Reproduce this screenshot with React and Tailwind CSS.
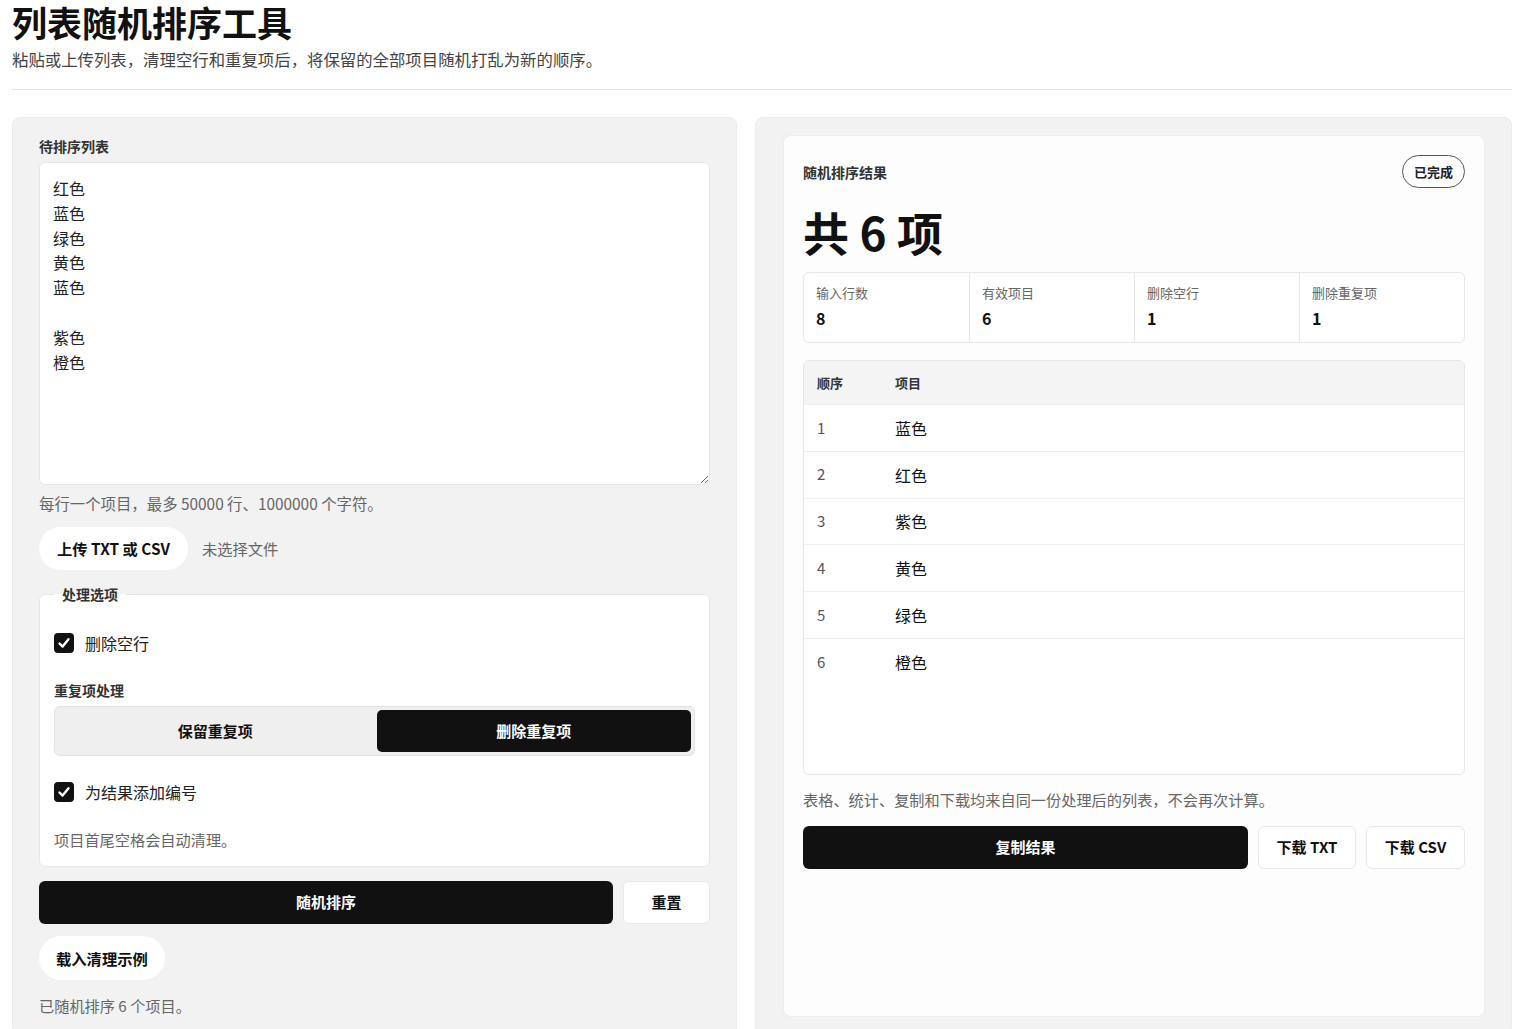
import React, { useState } from "react";

const FONT = { fontFamily: '"Noto Sans CJK SC", "Noto Sans", sans-serif' };

function Check({ checked, onChange, label }) {
  return (
    <label className="flex items-center h-6 cursor-pointer select-none" onClick={onChange}>
      <span className={`w-5 h-5 rounded-[4px] flex items-center justify-center ${checked ? "bg-[#111]" : "bg-white border border-[#888]"}`}>
        {checked && (
          <svg width="14" height="14" viewBox="0 0 14 14" fill="none">
            <path d="M2.5 7.5 L5.6 10.6 L11.5 3.2" stroke="white" strokeWidth="2.4" strokeLinecap="round" strokeLinejoin="round" />
          </svg>
        )}
      </span>
      <span className="ml-[11px] text-[16px] text-[#222]">{label}</span>
    </label>
  );
}

export default function App() {
  const [text, setText] = useState("红色\n蓝色\n绿色\n黄色\n蓝色\n\n紫色\n橙色");
  const [removeEmpty, setRemoveEmpty] = useState(true);
  const [addNum, setAddNum] = useState(true);
  const [dedupe, setDedupe] = useState(true);

  const rows = ["蓝色", "红色", "紫色", "黄色", "绿色", "橙色"];
  const stats = [
    ["输入行数", "8"],
    ["有效项目", "6"],
    ["删除空行", "1"],
    ["删除重复项", "1"],
  ];

  return (
    <div style={FONT} className="bg-white min-h-screen text-[#111]">
      <div className="ml-3 w-[1500px]">
        <h1 className="pt-px text-[35px] leading-[42px] font-bold text-[#111]">列表随机排序工具</h1>
        <p className="mt-[4px] text-[16.4px] leading-6 text-[#444]">
          粘贴或上传列表，清理空行和重复项后，将保留的全部项目随机打乱为新的顺序。
        </p>
        <div className="mt-[18px] border-t border-[#e3e3e3]" />

        <div className="mt-[27px] grid grid-cols-[725px_757px] gap-[18px]">
          {/* Left panel */}
          <section className="bg-[#f2f2f2] border border-[#ececec] rounded-lg pt-[18px] pb-[18px] px-[26px] flex flex-col">
            <label className="text-[14px] leading-5 font-bold text-[#333]">待排序列表</label>
            <textarea
              value={text}
              onChange={(e) => setText(e.target.value)}
              spellCheck={false}
              className="mt-[6px] h-[323px] w-full resize-y bg-white border border-[#e6e6e6] rounded-md px-[13px] pt-[13px] text-[16px] leading-[24.8px] text-[#222] outline-none"
              style={FONT}
            />
            <p className="mt-[8px] text-[15.4px] leading-[21px] text-[#666]">每行一个项目，最多 50000 行、1000000 个字符。</p>
            <div className="mt-[13px] flex items-center">
              <button className="h-[43px] px-[18px] rounded-full bg-white text-[15.3px] font-bold text-[#111]">上传 TXT 或 CSV</button>
              <span className="ml-[14px] text-[15.3px] text-[#666]">未选择文件</span>
            </div>

            <fieldset className="mt-[14px] bg-white border border-[#e6e6e6] rounded-md px-[14px] pt-[27px] pb-[16px]">
              <legend className="px-2 text-[14px] leading-5 font-bold text-[#333]">处理选项</legend>
              <Check checked={removeEmpty} onChange={() => setRemoveEmpty(!removeEmpty)} label="删除空行" />
              <div className="mt-[25px] text-[14px] leading-5 font-bold text-[#333]">重复项处理</div>
              <div className="mt-[6px] h-[50px] bg-[#efefef] border border-[#e2e2e2] rounded-md p-[3px] grid grid-cols-2 gap-1">
                <button
                  onClick={() => setDedupe(false)}
                  className={`rounded-[5px] text-[15px] font-bold ${!dedupe ? "bg-[#111] text-white" : "text-[#111]"}`}
                >
                  保留重复项
                </button>
                <button
                  onClick={() => setDedupe(true)}
                  className={`rounded-[5px] text-[15px] font-bold ${dedupe ? "bg-[#111] text-white" : "text-[#111]"}`}
                >
                  删除重复项
                </button>
              </div>
              <div className="mt-6">
                <Check checked={addNum} onChange={() => setAddNum(!addNum)} label="为结果添加编号" />
              </div>
              <p className="mt-[25px] text-[15.2px] leading-[21px] text-[#666]">项目首尾空格会自动清理。</p>
            </fieldset>

            <div className="mt-[14px] flex gap-[10px]">
              <button className="flex-1 h-[43px] rounded-md bg-[#111] text-white text-[15px] font-bold">随机排序</button>
              <button className="w-[87px] h-[43px] rounded-md bg-white border border-[#e8e8e8] text-[15px] font-bold text-[#111]">重置</button>
            </div>
            <div className="mt-[12px]">
              <button className="h-[44px] px-[17px] rounded-full bg-white text-[15.3px] font-bold text-[#111]">载入清理示例</button>
            </div>
            <p className="mt-[15px] text-[15.2px] leading-[21px] text-[#666]">已随机排序 6 个项目。</p>
          </section>

          {/* Right panel */}
          <section className="bg-[#f2f2f2] border border-[#ececec] rounded-lg pt-[17px] pb-[17px] pl-[27px] pr-[26px] flex flex-col">
            <div className="flex-1 bg-[#fdfdfd] border border-[#ececec] rounded-lg pt-[19px] px-[19px] pb-5">
              <div className="flex items-center justify-between">
                <h2 className="text-[14px] leading-5 font-bold text-[#333]">随机排序结果</h2>
                <span className="h-[33px] px-[11px] flex items-center rounded-full border border-[#555] text-[13px] font-bold text-[#222]">已完成</span>
              </div>
              <div className="mt-[19px] text-[46px] leading-[48px] font-bold text-[#111]">共 6 项</div>

              <div className="mt-[17px] grid grid-cols-4 border border-[#e6e6e6] rounded-md bg-white">
                {stats.map(([k, v], i) => (
                  <div key={k} className={`h-[69px] px-3 pt-[10px] ${i > 0 ? "border-l border-[#e6e6e6]" : ""}`}>
                    <div className="text-[13px] leading-[20px] text-[#666]">{k}</div>
                    <div className="mt-[5px] text-[16px] leading-[20px] font-bold text-[#111]">{v}</div>
                  </div>
                ))}
              </div>

              <div className="mt-[17px] h-[415px] border border-[#e6e6e6] rounded-md bg-white overflow-hidden">
                <div className="h-[43px] bg-[#f4f4f4] flex items-center px-[13px] text-[13px] font-bold text-[#333]">
                  <div className="w-[78px]">顺序</div>
                  <div>项目</div>
                </div>
                {rows.map((r, i) => (
                  <div key={i} className="h-[46.8px] border-t border-[#efefef] flex items-center px-[13px]">
                    <div className="w-[78px] text-[15px] text-[#555]">{i + 1}</div>
                    <div className="text-[16px] text-[#111]">{r}</div>
                  </div>
                ))}
              </div>

              <p className="mt-[14px] text-[15.2px] leading-[21px] text-[#666]">表格、统计、复制和下载均来自同一份处理后的列表，不会再次计算。</p>

              <div className="mt-[16px] flex gap-[10px]">
                <button className="flex-1 h-[43px] rounded-md bg-[#111] text-white text-[15px] font-bold">复制结果</button>
                <button className="w-[98px] h-[43px] rounded-md bg-white border border-[#e8e8e8] text-[15px] font-bold text-[#111]">下载 TXT</button>
                <button className="w-[99px] h-[43px] rounded-md bg-white border border-[#e8e8e8] text-[15px] font-bold text-[#111]">下载 CSV</button>
              </div>
            </div>
          </section>
        </div>
      </div>
    </div>
  );
}
